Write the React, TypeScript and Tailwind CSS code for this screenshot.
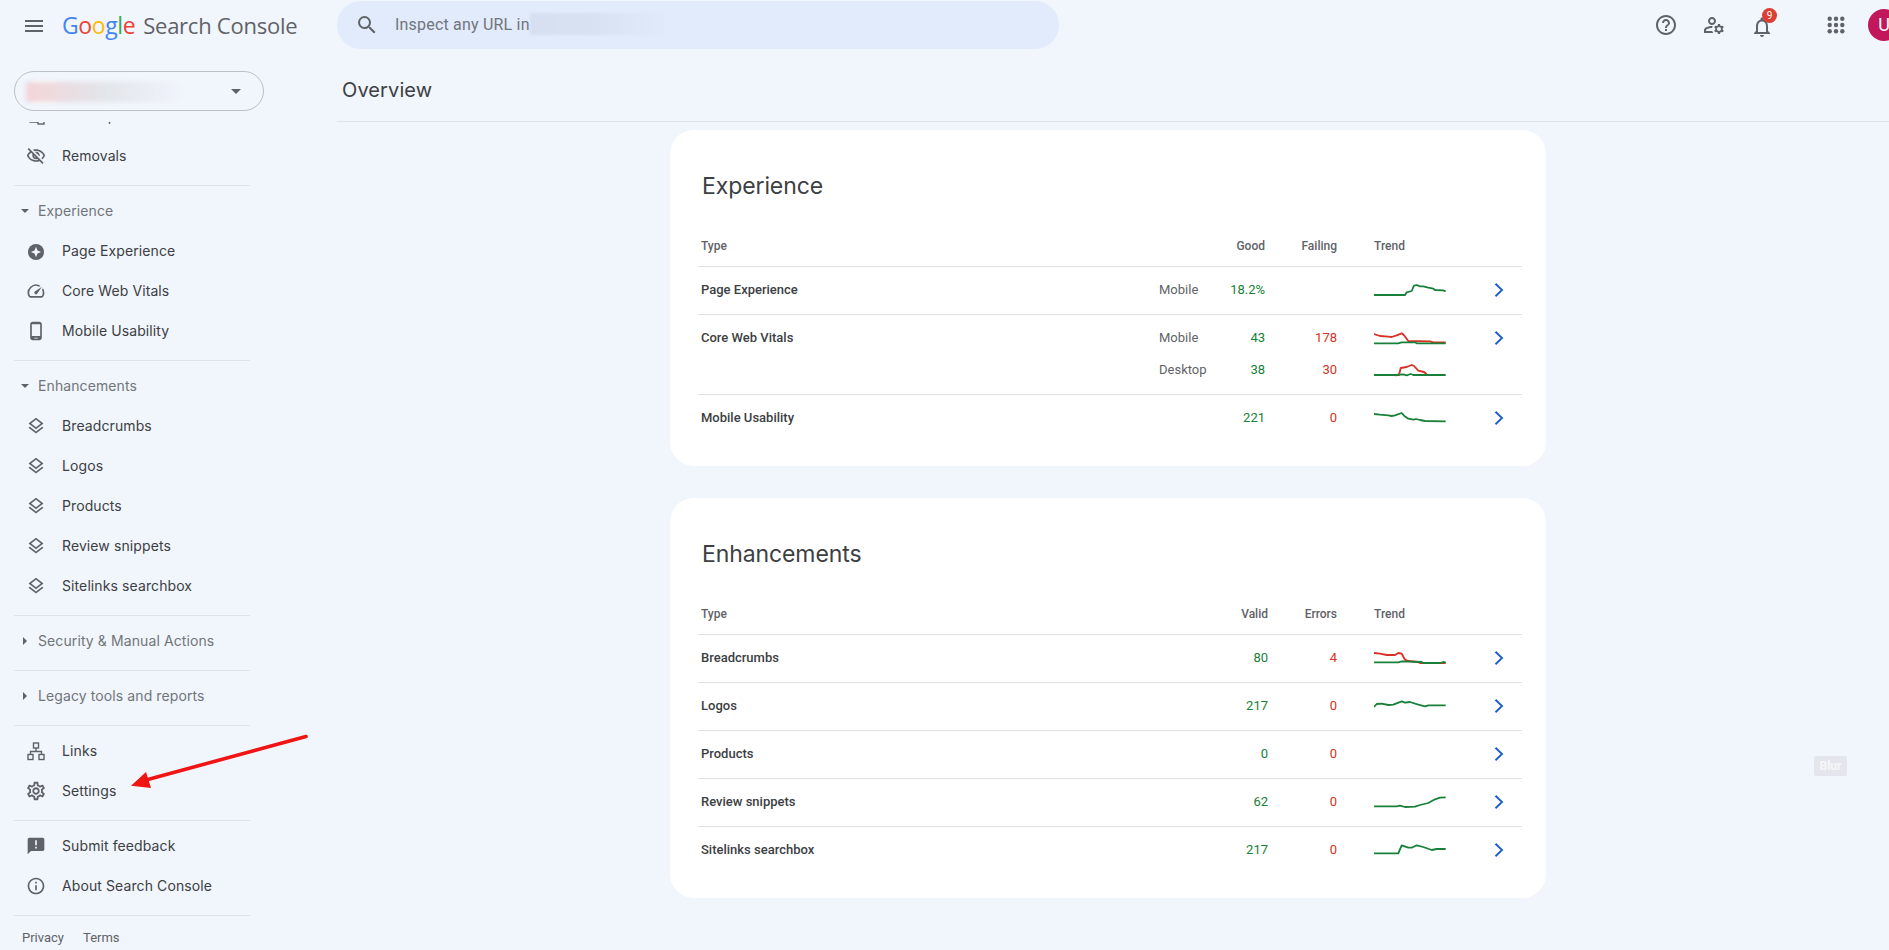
import React from "react";
import {
  MdMenu, MdSearch, MdHelpOutline, MdOutlineManageAccounts, MdOutlineNotifications,
  MdArrowDropDown, MdOutlineVisibilityOff, MdOutlineSpeed, MdOutlinePhoneAndroid, MdOutlineLayers,
  MdOutlineSettings, MdAnnouncement, MdInfoOutline,
} from "react-icons/md";

const GREEN = "#188038";
const RED = "#d93025";

type Pt = [number, number];
type Line = { c: string; p: Pt[] };

function Spark({ cy, lines }: { cy: number; lines: Line[] }) {
  return (
    <svg width="72" height="24" viewBox="0 0 72 24" fill="none" className="block">
      {lines.map((l, i) => (
        <polyline key={i} fill="none" stroke={l.c} strokeWidth="1.8" strokeLinejoin="round"
          points={l.p.map(([x, y]) => `${((x - 822) / 3).toFixed(1)},${((y - cy) / 3 + 12).toFixed(1)}`).join(" ")} />
      ))}
    </svg>
  );
}

function Chevron() {
  return (
    <svg width="10" height="14" viewBox="0 0 10 14" fill="none" className="block">
      <path d="M1.5 0.8 L8 7 L1.5 13.2" stroke="#1a5fd0" strokeWidth="1.9" />
    </svg>
  );
}

function StarIcon() {
  return (
    <svg width="22" height="22" viewBox="0 0 22 22">
      <circle cx="11" cy="12" r="8" fill="#5f6368" />
      <path d="M11 6.8 L12.5 10.5 L16.2 12 L12.5 13.5 L11 17.2 L9.5 13.5 L5.8 12 L9.5 10.5 Z" fill="#f1f5fc" />
    </svg>
  );
}

function LinksIcon() {
  return (
    <svg width="22" height="22" viewBox="0 0 22 22" fill="none" stroke="#5f6368" strokeWidth="1.4">
      <rect x="8.5" y="3" width="5" height="5" />
      <rect x="3" y="14.5" width="5" height="5" />
      <rect x="14" y="14.5" width="5" height="5" />
      <path d="M11 8 V11.5 M5.5 14.5 V11.5 H16.5 V14.5" />
    </svg>
  );
}

function SitemapIcon() {
  return (
    <svg width="22" height="22" viewBox="0 0 22 22" fill="none" stroke="#5f6368" strokeWidth="1.4">
      <rect x="8" y="3" width="6" height="5" />
      <path d="M11 8 V17 M5 6 V17 H13" />
      <rect x="13" y="14" width="6" height="5" />
    </svg>
  );
}

function AppsIcon() {
  const pos = [5.7, 12, 18.3];
  return (
    <svg width="24" height="24" viewBox="0 0 24 24" fill="#5f6368">
      {pos.map((y) => pos.map((x) => <circle key={`${x}-${y}`} cx={x} cy={y} r="2.2" />))}
    </svg>
  );
}

function Row({ icon, label }: { icon: React.ReactNode; label: string }) {
  return (
    <div className="h-10 flex items-center pl-[11px] gap-[15px] text-[14px] tracking-[0.1px] text-[#3c4043] font-['Inter',sans-serif] shrink-0">
      <span className="w-[22px] h-[22px] flex items-center justify-center text-[#5f6368] shrink-0">{icon}</span>
      <span className="mb-[1px]">{label}</span>
    </div>
  );
}

function Head({ label, open }: { label: string; open?: boolean }) {
  return (
    <div className="h-10 flex items-center text-[14px] tracking-[0.1px] text-[#70757a] font-['Inter',sans-serif] shrink-0">
      <span className="w-6 pr-[2px] flex items-center justify-center">
        {open ? (
          <span className="block w-0 h-0 border-x-[4px] border-x-transparent border-t-[4px] border-t-[#5f6368]" />
        ) : (
          <span className="block w-0 h-0 border-y-[4px] border-y-transparent border-l-[4px] border-l-[#5f6368]" />
        )}
      </span>
      <span className="mb-[1px]">{label}</span>
    </div>
  );
}

function Section({ children }: { children: React.ReactNode }) {
  return <div className="w-[236px] pb-[9px] mb-[5px] border-b border-[#e0e3e8] shrink-0">{children}</div>;
}

const layers = <MdOutlineLayers size={20} />;

function Sidebar() {
  return (
    <aside className="w-[337px] shrink-0 flex flex-col h-[950px]">
      <div className="h-[50px] pt-[1px] flex items-center pl-[22px] gap-4 shrink-0">
        <MdMenu size={24} color="#5f6368" />
        <div className="flex items-baseline gap-[8px] text-[22px] text-[#5f6368] font-['Open_Sans',sans-serif] whitespace-nowrap tracking-[-0.25px]">
          <span className="text-[23px] tracking-[-0.4px]">
            <span className="text-[#4285f4]">G</span>
            <span className="text-[#ea4335]">o</span>
            <span className="text-[#fbbc05]">o</span>
            <span className="text-[#4285f4]">g</span>
            <span className="text-[#34a853]">l</span>
            <span className="text-[#ea4335]">e</span>
          </span>
          <span>Search Console</span>
        </div>
      </div>
      <div className="ml-[14px] mt-[21px] w-[250px] h-[40px] rounded-full border border-[#bdc1c6] flex items-center relative shrink-0">
        <div className="absolute left-[17px] top-[8px] w-[23px] h-[24px] bg-white/60 blur-[1px]" />
        <div className="absolute left-[11px] top-[10px] w-[158px] h-[20px] bg-gradient-to-r from-[#f3d5d8] via-[#e2e5ea] to-transparent blur-[2px]" />
        <span className="ml-auto mr-[15px] text-[#5f6368]"><MdArrowDropDown size={24} /></span>
      </div>
      <div className="mt-[11px] pl-[14px] flex-1 overflow-hidden flex flex-col">
        <div className="-mt-[26px] flex flex-col">
          <Section>
            <Row icon={<SitemapIcon />} label="Sitemaps" />
            <Row icon={<MdOutlineVisibilityOff size={20} />} label="Removals" />
          </Section>
          <Section>
            <Head label="Experience" open />
            <Row icon={<StarIcon />} label="Page Experience" />
            <Row icon={<MdOutlineSpeed size={20} />} label="Core Web Vitals" />
            <Row icon={<MdOutlinePhoneAndroid size={20} />} label="Mobile Usability" />
          </Section>
          <Section>
            <Head label="Enhancements" open />
            <Row icon={layers} label="Breadcrumbs" />
            <Row icon={layers} label="Logos" />
            <Row icon={layers} label="Products" />
            <Row icon={layers} label="Review snippets" />
            <Row icon={layers} label="Sitelinks searchbox" />
          </Section>
          <Section><Head label="Security & Manual Actions" /></Section>
          <Section><Head label="Legacy tools and reports" /></Section>
          <Section>
            <Row icon={<LinksIcon />} label="Links" />
            <Row icon={<MdOutlineSettings size={22} />} label="Settings" />
          </Section>
          <Section>
            <Row icon={<MdAnnouncement size={20} />} label="Submit feedback" />
            <Row icon={<MdInfoOutline size={20} />} label="About Search Console" />
          </Section>
          <div className="flex gap-[19px] pl-2 pt-[7px] text-[13px] text-[#5f6368] font-['Roboto',sans-serif]">
            <span>Privacy</span>
            <span>Terms</span>
          </div>
        </div>
      </div>
    </aside>
  );
}

function SearchBar() {
  return (
    <div className="w-[722px] h-[48px] mt-[1px] rounded-full bg-[#e1ebfc] flex items-center pl-[18px] relative shrink-0">
      <MdSearch size={24} color="#5f6368" />
      <span className="ml-[16px] text-[16px] tracking-[0.2px] text-[#70757a] font-['Roboto',sans-serif]">Inspect any URL in</span>
      <div className="absolute left-[193px] top-[12px] w-[140px] h-[22px] bg-gradient-to-r from-[#d7e0f0] via-[#d9e2f2] to-transparent blur-[1px]" />
    </div>
  );
}

function TopRight() {
  return (
    <div className="ml-[583px] mt-[1px] flex items-center text-[#5f6368] shrink-0">
      <span className="w-12 h-12 flex items-center justify-center"><MdHelpOutline size={24} /></span>
      <span className="w-12 h-12 flex items-center justify-center"><MdOutlineManageAccounts size={24} /></span>
      <span className="w-12 h-12 flex items-center justify-center relative">
        <span className="mt-[4px]"><MdOutlineNotifications size={24} /></span>
        <span className="absolute left-[24px] top-[7px] w-[15px] h-[15px] rounded-full bg-[#dc3e33] text-white text-[10px] leading-[15px] text-center font-['Roboto',sans-serif]">9</span>
      </span>
      <span className="w-12 h-12 ml-[26px] flex items-center justify-center"><AppsIcon /></span>
      <span className="w-8 h-8 ml-2 rounded-full bg-[#c2185b] text-white text-[18px] leading-[32px] text-center shrink-0 font-['Roboto',sans-serif]">U</span>
    </div>
  );
}

const labelCls = "font-['Roboto',sans-serif] font-medium text-[13px] text-[#3c4043] pl-[3px]";
const numGood = "font-['Roboto',sans-serif] text-[13px] text-right text-[#188038]";
const numBad = "font-['Roboto',sans-serif] text-[13px] text-right text-[#d93025]";
const headCls = "font-['Roboto',sans-serif] font-medium text-[12px] text-[#5f6368]";

function ExpLine({ label, device, good, bad, spark, chev }: { label?: string; device?: string; good: string; bad?: string; spark: React.ReactNode; chev?: boolean }) {
  return (
    <div className="grid grid-cols-[461px_51px_55px_72px_146px_39px] h-[32px] items-center">
      <span className={labelCls}>{label}</span>
      <span className="font-['Roboto',sans-serif] text-[13px] text-[#5f6368]">{device}</span>
      <span className={numGood}>{good}</span>
      <span className={numBad}>{bad}</span>
      <span className="pl-[37px]">{spark}</span>
      <span className="pl-[11px]">{chev && <Chevron />}</span>
    </div>
  );
}

function EnhRow({ label, good, bad, spark, last }: { label: string; good: string; bad: string; spark?: React.ReactNode; last?: boolean }) {
  return (
    <div className={last
      ? "grid grid-cols-[570px_69px_146px_39px] h-[48px] pb-[2px] items-center"
      : "grid grid-cols-[570px_69px_146px_39px] h-[48px] pb-[2px] items-center border-b border-[#e0e0e0]"}>
      <span className={labelCls}>{label}</span>
      <span className="relative">
        <span className={numBad + " block"}>{bad}</span>
        <span className={numGood + " absolute right-[69px] top-0"}>{good}</span>
      </span>
      <span className="pl-[37px] h-6">{spark}</span>
      <span className="pl-[11px]"><Chevron /></span>
    </div>
  );
}

const Card = ({ title, children }: { title: string; children: React.ReactNode }) => (
  <section className="w-[876px] bg-white rounded-[24px] pt-[40px] pl-[28px] pr-[24px] pb-[23px]">
    <h2 className="h-[32px] leading-[32px] pl-[4px] text-[23px] tracking-[-0.1px] text-[#3c4043] font-['Inter',sans-serif] font-normal">{title}</h2>
    {children}
  </section>
);

export default function App() {
  return (
    <div className="relative w-[1889px] h-[950px] overflow-hidden bg-[#f1f5fc] flex">
      <Sidebar />
      <div className="flex-1 flex flex-col min-w-0">
        <header className="h-[60px] flex items-start shrink-0">
          <SearchBar />
          <TopRight />
        </header>
        <div className="h-[62px] flex items-center pl-[5px] pb-[2px] border-b border-[#dfe3ea] text-[20px] tracking-[0.1px] text-[#3c4043] font-['Inter',sans-serif] shrink-0">Overview</div>
        <main className="pt-[8px] pl-[333px] flex flex-col gap-[32px]">
          <Card title="Experience">
            <div className="mt-[24px] grid grid-cols-[461px_51px_55px_72px_146px_39px] h-[41px] items-center border-b border-[#e0e0e0]">
              <span className={headCls + " pl-[3px]"}>Type</span>
              <span />
              <span className={headCls + " text-right"}>Good</span>
              <span className={headCls + " text-right"}>Failing</span>
              <span className={headCls + " pl-[37px]"}>Trend</span>
              <span />
            </div>
            <div className="h-[48px] pb-[2px] flex flex-col justify-center border-b border-[#e0e0e0]">
              <ExpLine label="Page Experience" device="Mobile" good="18.2%" chev spark={
                <Spark cy={209} lines={[{ c: GREEN, p: [[822,224],[915,224],[920,216],[935,212],[942,196],[950,194],[960,198],[970,198],[985,202],[1000,205],[1005,209],[1030,210],[1037,213]] }]} />
              } />
            </div>
            <div className="h-[80px] pb-[2px] flex flex-col justify-center border-b border-[#e0e0e0]">
              <ExpLine label="Core Web Vitals" device="Mobile" good="43" bad="178" chev spark={
                <Spark cy={353} lines={[
                  { c: RED, p: [[822,341],[840,347],[865,349],[875,350],[890,345],[905,339],[912,345],[925,362],[990,363],[1000,366],[1037,366]] },
                  { c: GREEN, p: [[822,369],[895,369],[905,366],[945,366],[950,369],[1037,369]] },
                ]} />
              } />
              <ExpLine device="Desktop" good="38" bad="30" spark={
                <Spark cy={449} lines={[
                  { c: RED, p: [[885,465],[897,464],[902,443],[920,440],[935,434],[942,437],[955,451],[972,455],[980,462]] },
                  { c: GREEN, p: [[822,464],[885,464],[910,462],[920,465],[932,461],[940,464],[1037,464]] },
                ]} />
              } />
            </div>
            <div className="h-[48px] pb-[2px] flex flex-col justify-center">
              <ExpLine label="Mobile Usability" good="221" bad="0" chev spark={
                <Spark cy={593} lines={[{ c: GREEN, p: [[822,581],[840,583],[865,585],[875,587],[885,585],[893,582],[905,578],[912,586],[925,595],[940,598],[948,596],[960,599],[975,602],[1037,603]] }]} />
              } />
            </div>
          </Card>
          <Card title="Enhancements">
            <div className="mt-[24px] grid grid-cols-[570px_69px_146px_39px] h-[41px] items-center border-b border-[#e0e0e0]">
              <span className={headCls + " pl-[3px] relative"}>Type<span className="absolute right-0 top-0">Valid</span></span>
              <span className={headCls + " text-right"}>Errors</span>
              <span className={headCls + " pl-[37px]"}>Trend</span>
              <span />
            </div>
            <EnhRow label="Breadcrumbs" good="80" bad="4" spark={
              <Spark cy={203} lines={[
                { c: RED, p: [[822,188],[840,190],[860,194],[885,194],[895,188],[905,190],[915,208],[925,212],[955,215],[960,218],[1037,218]] },
                { c: GREEN, p: [[822,216],[895,216],[905,213],[965,215],[970,218],[1020,218],[1030,215],[1037,216]] },
              ]} />
            } />
            <EnhRow label="Logos" good="217" bad="0" spark={
              <Spark cy={347} lines={[{ c: GREEN, p: [[822,350],[830,341],[845,340],[865,344],[880,343],[905,333],[915,337],[930,335],[955,343],[975,348],[985,345],[1037,345]] }]} />
            } />
            <EnhRow label="Products" good="0" bad="0" />
            <EnhRow label="Review snippets" good="62" bad="0" spark={
              <Spark cy={635} lines={[{ c: GREEN, p: [[822,648],[890,648],[900,646],[915,650],[945,649],[960,644],[985,638],[1005,627],[1020,622],[1037,621]] }]} />
            } />
            <EnhRow label="Sitelinks searchbox" good="217" bad="0" last spark={
              <Spark cy={779} lines={[{ c: GREEN, p: [[822,789],[895,789],[905,765],[925,772],[935,772],[950,765],[970,770],[995,779],[1010,776],[1037,776]] }]} />
            } />
          </Card>
        </main>
      </div>
      <div className="absolute left-[1814px] top-[756px] w-[33px] h-[20px] rounded-[2px] bg-[#e3e6ec] text-[#f6f7f9] text-[12px] font-bold leading-[20px] text-center font-['Roboto',sans-serif]">Blur</div>
      <svg className="absolute left-0 top-0 pointer-events-none" width="340" height="820" viewBox="0 0 340 820" fill="none">
        <path d="M306 736.5 L146 780" stroke="#f01414" strokeWidth="3.6" strokeLinecap="round" />
        <path d="M131 785.7 L146 772 L151 788 Z" fill="#f01414" />
      </svg>
    </div>
  );
}
